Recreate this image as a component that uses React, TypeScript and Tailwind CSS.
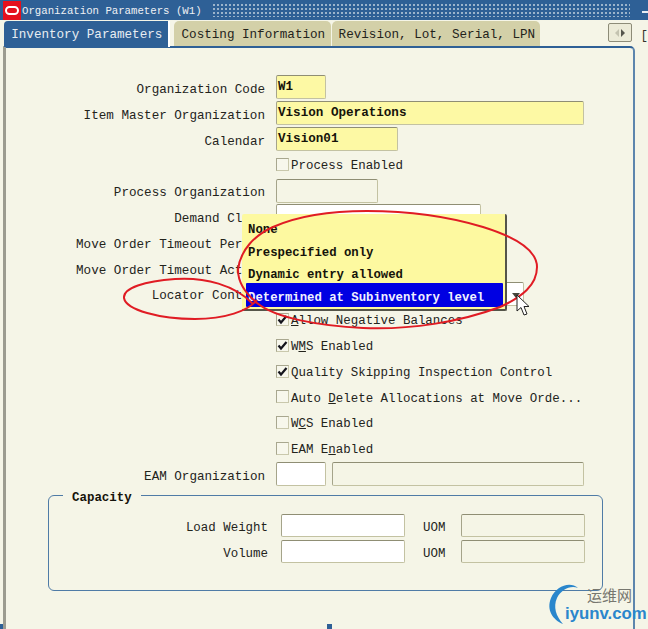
import type { ReactNode } from 'react';

const mono = "font-['Liberation_Mono','Courier_New',monospace]";

const Field = ({ width, tone = 'white', text, height = 'h-[24px]' }: { width: string; tone?: 'white' | 'yellow' | 'off'; text?: string; height?: string }) => {
  const bg = tone === 'yellow' ? 'bg-[#fdf9a4]' : tone === 'off' ? 'bg-[#f5f5e6]' : 'bg-white';
  return (
    <div className={`${width} ${height} ${bg} shrink-0 rounded-[2px] border border-[#c3c2a2] border-t-[#8f8e74] border-l-[#a5a48a] pl-px flex items-center font-bold text-[12.6px] text-[#15130a] whitespace-nowrap overflow-hidden`}>
      {text}
    </div>
  );
};

const Row = ({ label, children }: { label?: string; children?: ReactNode }) => (
  <div className="h-[25.8px] flex items-center">
    <div className="w-[260px] shrink-0 pr-px text-right text-[12.6px] pt-[3px] whitespace-nowrap">{label}</div>
    <div className="ml-[10px] flex items-center gap-[6px] -mt-[3px]">{children}</div>
  </div>
);

const Check = ({ checked, children }: { checked?: boolean; children: ReactNode }) => (
  <div className="flex items-center pt-[4px]">
    <div className="relative w-[13px] h-[13px] shrink-0 border border-[#c9c8ac] border-t-[#a8a78f] border-l-[#a8a78f] bg-[#f7f7ec] -mt-[4px]">
      {checked && (
        <svg viewBox="0 0 13 13" className="absolute -left-px -top-px w-[13px] h-[13px]">
          <path d="M2.5 6.5 L5 9.5 L10.5 3" fill="none" stroke="#14141c" strokeWidth="2.2" />
        </svg>
      )}
    </div>
    <span className="ml-[2px] whitespace-nowrap">{children}</span>
  </div>
);

const Tab = ({ width, children }: { width: string; children: ReactNode }) => (
  <div className={`${width} h-[25px] mt-[1px] pt-[3px] pl-[2px] rounded-t-[5px] bg-[#d3d0a8] flex items-center justify-center text-[12.6px] text-[#23231b] whitespace-nowrap`}>
    {children}
  </div>
);

export default function App() {
  return (
    <div className={`${mono} relative w-[648px] h-[629px] overflow-hidden bg-[#f5f5e7] text-[12.45px] text-[#23231b]`}>
      {/* Title bar */}
      <div className="h-[20px] bg-[#2e6096] flex items-center pl-[3px] pr-[18px]">
        <div className="w-[18px] h-[19px] bg-[#e5101c] flex items-center justify-center shrink-0">
          <div className="w-[14px] h-[9px] rounded-[5px] border-[2.5px] border-white" />
        </div>
        <span className="ml-[1px] pt-[3px] text-[10.7px] text-[#eef1f4] whitespace-nowrap">Organization Parameters (W1)</span>
        <div className="ml-[10px] flex-1 h-[14px] bg-[radial-gradient(circle,#9db5cc_0.7px,transparent_1.1px)] bg-[length:4px_4px]" />
      </div>

      {/* Tabs */}
      <div className="h-[26px] flex items-start pl-[4px] relative">
        <div className="w-[166px] h-[26px] mt-[1px] pt-[3px] pl-[2px] bg-[#2e6096] rounded-tl-[4px] border-r-2 border-white flex items-center justify-center text-[12.6px] text-[#e8edf2] whitespace-nowrap">
          Inventory Parameters
        </div>
        <div className="w-[4px]" />
        <Tab width="w-[158px]">Costing Information</Tab>
        <div className="w-px" />
        <Tab width="w-[208px]">Revision, Lot, Serial, LPN</Tab>
        <div className="ml-[68px] mt-[3px] w-[24px] h-[19px] rounded-[2px] border border-[#8d8c78] bg-[#ecebd8] flex items-center justify-center gap-[2px]">
          <span className="w-0 h-0 border-y-[4px] border-y-transparent border-r-[4px] border-r-[#c4c3b0]" />
          <span className="w-0 h-0 border-y-[4px] border-y-transparent border-l-[4px] border-l-[#55554c]" />
        </div>
        <span className="ml-[9px] mt-[7px] text-[#33332b]">[</span>
      </div>

      {/* Main panel */}
      <div className="ml-[3px] w-[632px] h-[583px] border-l-[3px] border-l-[#9c9c90] border-r-2 border-r-[#5d86ad] border-t-2 border-t-[#2e6096] rounded-tr-[5px] pt-[28px]">
        <Row label="Organization Code"><Field width="w-[50px]" tone="yellow" text="W1" /></Row>
        <Row label="Item Master Organization"><Field width="w-[308px]" tone="yellow" text="Vision Operations" /></Row>
        <Row label="Calendar"><Field width="w-[122px]" tone="yellow" text="Vision01" /></Row>
        <Row><Check>Process Enabled</Check></Row>
        <Row label="Process Organization"><Field width="w-[102px]" tone="off" /></Row>
        <Row label="Demand Class"><Field width="w-[205px]" /></Row>
        <Row label="Move Order Timeout Period" />
        <Row label="Move Order Timeout Action" />
        <Row label="Locator Control"><Field width="w-[248px]" /></Row>
        <Row><Check checked><u>A</u>llow Negative Balances</Check></Row>
        <Row><Check checked>W<u>M</u>S Enabled</Check></Row>
        <Row><Check checked>Quality Skipping Inspection Control</Check></Row>
        <Row><Check>Auto <u>D</u>elete Allocations at Move Orde...</Check></Row>
        <Row><Check>W<u>C</u>S Enabled</Check></Row>
        <Row><Check>EAM E<u>n</u>abled</Check></Row>
        <Row label="EAM Organization">
          <Field width="w-[50px]" />
          <Field width="w-[252px]" tone="off" />
        </Row>

        {/* Capacity group */}
        <div className="relative mt-[6px] ml-[42px] w-[555px] h-[96px] rounded-[6px] border border-[#4f7ba6] pt-[17px]">
          <span className="absolute left-[14px] -top-[7px] px-[9px] bg-[#f5f5e7] font-bold text-[#15130a]">Capacity</span>
          {['Load Weight', 'Volume'].map((label) => (
            <div key={label} className="h-[26px] flex items-center">
              <div className="w-[220px] pr-px pt-[5px] text-right whitespace-nowrap">{label}</div>
              <div className="ml-[12px]"><Field width="w-[124px]" height="h-[23px]" /></div>
              <div className="ml-[18px] w-[38px] pt-[5px]">UOM</div>
              <Field width="w-[124px]" height="h-[23px]" tone="off" />
            </div>
          ))}
        </div>
      </div>

      {/* Open poplist */}
      <div className="absolute left-[242px] top-[214px] w-[265px] h-[97px] rounded-[2px] bg-[#fdf9a0] border-r-2 border-b-2 border-[#55554a] pl-[4px] pr-[2px] pt-px font-bold text-[12.3px] text-[#15130a]">
        <div className="h-[22.6px] pl-[2px] pt-[8px] flex items-center">None</div>
        <div className="h-[22.6px] pl-[2px] pt-[8px] flex items-center">Prespecified only</div>
        <div className="h-[22.6px] pl-[2px] pt-[8px] flex items-center">Dynamic entry allowed</div>
        <div className="h-[24px] pl-[2px] pt-[6px] flex items-center rounded-[1px] bg-[#0000e2] text-[#f0f0ff] whitespace-nowrap">Determined at Subinventory level</div>
      </div>

      {/* Combo arrow */}
      <div className="absolute left-[512px] top-[293px] w-0 h-0 border-x-[4px] border-x-transparent border-t-[5px] border-t-[#45453c]" />

      {/* Edge dash in the title bar */}
      <div className="absolute left-[642px] top-[11px] w-[6px] h-[2px] bg-[#e8edf2]" />

      {/* Annotations, cursor and watermark drawn over the form */}
      <svg viewBox="0 0 648 629" className="absolute inset-0 w-[648px] h-[629px] pointer-events-none">
        <path d="M238 270 C240 250 255 235 273 227 C300 215 335 211 367 211 C410 211 450 217 483 227 C515 237 537 250 537 267 C537 285 522 297 500 307 C460 322 410 330 363 328 C320 326 275 318 257 303 C245 293 238 282 238 270 Z" fill="none" stroke="#e01c24" strokeWidth="2" />
        <path d="M253 304 C235 285 205 277 175 279 C145 281 123 288 124 298 C126 310 160 319 195 319 C225 319 248 311 257 300" fill="none" stroke="#e01c24" strokeWidth="2" />
        <path d="M517 295 L517 311 L521 307.5 L524 315 L527 314 L524 306.5 L529 306.5 Z" fill="#fff" stroke="#222" strokeWidth="1" />
        <path d="M578 588 C570 581 556 586 551 598 C546 610 553 620 563 624 C556 616 553 607 557 598 C561 590 570 585 578 588 Z" fill="#2a86cc" />
      </svg>
      <div className="absolute left-[587px] top-[586px] font-['Noto_Sans_CJK_SC',sans-serif] text-[15px] leading-[18px] text-[#77776f]">运维网</div>
      <div className="absolute left-[565px] top-[604px] font-['Liberation_Sans',sans-serif] font-bold text-[16.8px] leading-[20px] text-[#2a86cc]">iyunv.com</div>

      {/* Edges of the window behind */}
      <div className="absolute left-0 top-[624px] w-[3px] h-[5px] bg-[#2e6096]" />
      <div className="absolute left-[327px] top-[624px] w-[5px] h-[5px] bg-[#2e6096]" />
    </div>
  );
}
